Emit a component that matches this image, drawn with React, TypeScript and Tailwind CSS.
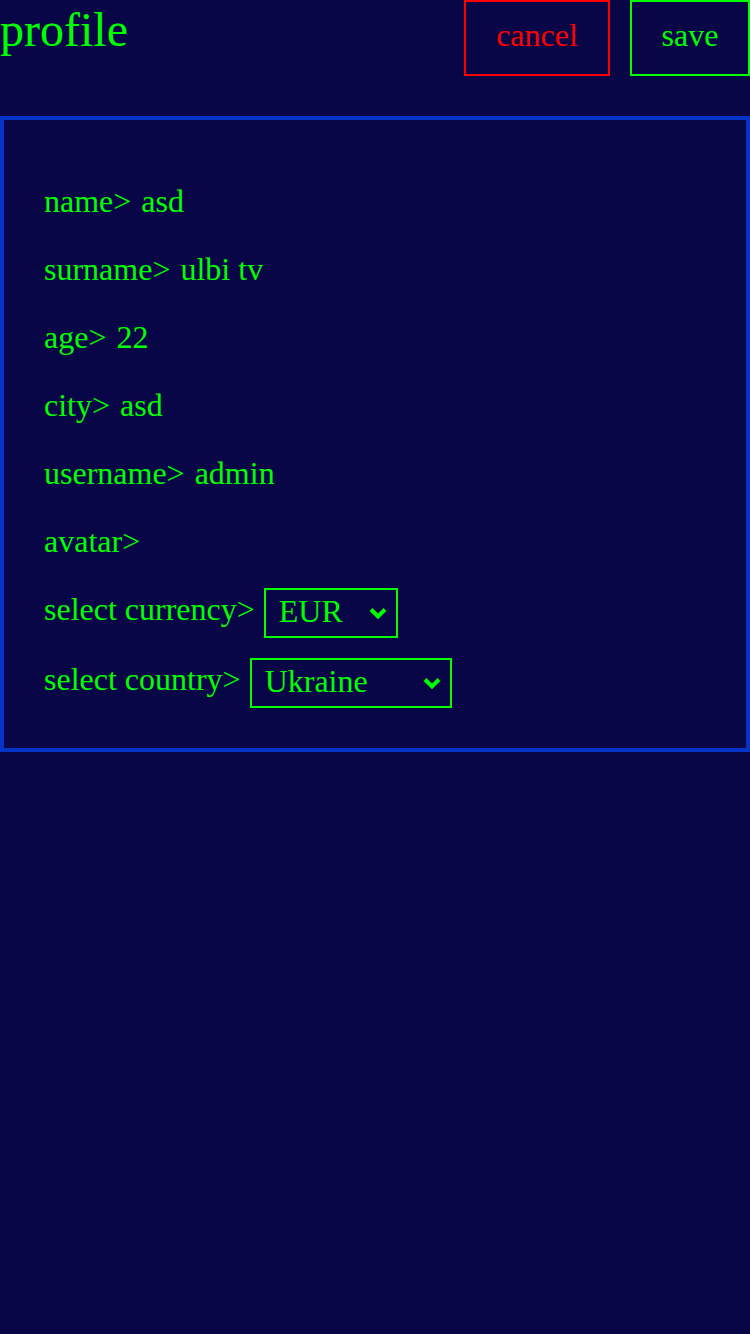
const green = "text-[#00ff00]";

type Field = { label: string; value?: string };

const fields: Field[] = [
  { label: "name>", value: "asd" },
  { label: "surname>", value: "ulbi tv" },
  { label: "age>", value: "22" },
  { label: "city>", value: "asd" },
  { label: "username>", value: "admin" },
  { label: "avatar>" },
];

function Chevron() {
  return (
    <svg
      width="20"
      height="14"
      viewBox="0 0 20 14"
      className="pointer-events-none absolute right-[8px] top-1/2 -translate-y-1/2"
    >
      <path d="M3 3.5 L10 10.5 L17 3.5" fill="none" stroke="#00ff00" strokeWidth="4" />
    </svg>
  );
}

function FakeSelect({ value, width }: { value: string; width: string }) {
  return (
    <div
      className={`relative flex h-[50px] items-center border-2 border-[#00ff00] pb-[4px] pl-[13px] ${width}`}
    >
      <span className={`text-[32px] leading-none ${green}`}>{value}</span>
      <Chevron />
    </div>
  );
}

export default function App() {
  return (
    <div
      className="min-h-[1334px] w-[750px] bg-[#090648]"
      style={{ fontFamily: '"Liberation Serif", "Times New Roman", serif' }}
    >
      <header className="flex h-[76px] items-start justify-between">
        <h1 className={`-mt-[6px] text-[48px] ${green}`}>profile</h1>
        <div className="flex gap-[20px]">
          <button className="h-[76px] w-[146px] border-2 border-[#ff0000] pb-[6px] text-[32px] text-[#ff0000]">
            cancel
          </button>
          <button className={`h-[76px] w-[120px] border-2 border-[#00ff00] pb-[6px] text-[32px] ${green}`}>
            save
          </button>
        </div>
      </header>

      <section className="mt-[40px] flex flex-col border-4 border-[#0433c8] px-[40px] pb-[40px] pt-[57px]">
        {fields.map((f) => (
          <div key={f.label} className={`h-[68px] text-[32px] ${green}`}>
            {f.label}
            {f.value ? <span className="ml-[10px]">{f.value}</span> : null}
          </div>
        ))}
        <div className="mt-[3px] flex h-[70px] items-start gap-[9px]">
          <span className={`-mt-[3px] text-[32px] ${green}`}>select currency&gt;</span>
          <FakeSelect value="EUR" width="w-[134px]" />
        </div>
        <div className="flex h-[50px] items-start gap-[9px]">
          <span className={`-mt-[3px] text-[32px] ${green}`}>select country&gt;</span>
          <FakeSelect value="Ukraine" width="w-[202px]" />
        </div>
      </section>
    </div>
  );
}
